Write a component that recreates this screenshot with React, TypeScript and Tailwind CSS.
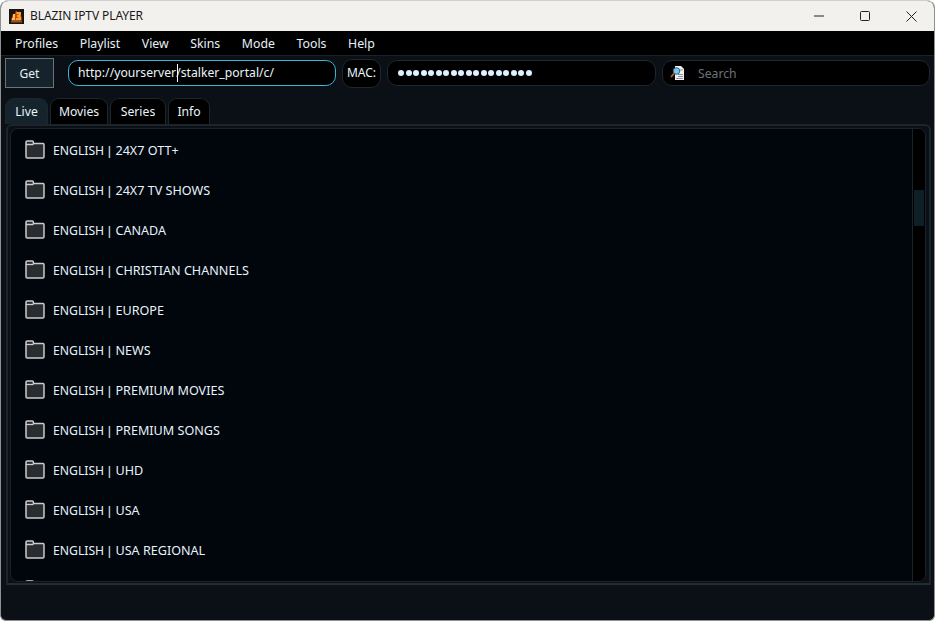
const categories = [
  "24X7 OTT+",
  "24X7 TV SHOWS",
  "CANADA",
  "CHRISTIAN CHANNELS",
  "EUROPE",
  "NEWS",
  "PREMIUM MOVIES",
  "PREMIUM SONGS",
  "UHD",
  "USA",
  "USA REGIONAL",
];

function Folder() {
  return (
    <svg width="20" height="19" viewBox="0 0 20 19" className="shrink-0">
      <path
        d="M1 6V2.200C1 1.500 1.500 1 2.200 1h5C7.900 1 8.400 1.500 8.400 2.200V3.400H18c.6 0 1 .4 1 1V16.800c0 .7-.5 1.200-1.200 1.200H2.200C1.500 18 1 17.500 1 16.800V6z"
        fill="#2a2d30"
        stroke="#cbcbcb"
        strokeWidth="1.500"
      />
      <path d="M1 4.500h7.500" stroke="#cbcbcb" strokeWidth="1.300" fill="none" />
    </svg>
  );
}

function Logo() {
  return (
    <svg width="15" height="15" viewBox="0 0 15 15" className="shrink-0">
      <rect width="15" height="15" fill="#1a1410" />
      <path d="M2 11L4 5l1.500 1L7 1.500l2 2 2-1 1.500 5L13 11l-1 1H3z" fill="#c9421a" />
      <path d="M7.500 3h4.500v3l-1 1 1 1v3H7V9h2.500V8H8V6h1.500V5H7.500z" fill="#f5a623" />
      <path d="M4 5h2v6H3V9h1z" fill="#f2c14e" />
      <rect x="2" y="12" width="11" height="1.500" fill="#8a5a20" />
    </svg>
  );
}

function SearchDoc() {
  return (
    <svg width="16" height="16" viewBox="0 0 16 16" className="shrink-0">
      <path d="M5 1h6l3 3v11H5z" fill="#f2f2f2" />
      <path d="M8 9.500h5M8 11.500h5M6 13.500h7M10 5h3" stroke="#6c7a86" strokeWidth="0.800" />
      <circle cx="6.500" cy="6" r="3.300" fill="#7cc4ee" stroke="#2f5f86" strokeWidth="1" />
      <path d="M4 8.500L1 12" stroke="#b5602c" strokeWidth="1.800" />
    </svg>
  );
}

export default function App() {
  return (
    <div
      className="w-[935px] h-[621px] overflow-hidden flex flex-col bg-[#0a1016] rounded-t-[8px] rounded-b-[6px] border border-[#8d8f90] border-t-[#cfcfcf]"
      style={{ fontFamily: '"Noto Sans", "Open Sans", sans-serif' }}
    >
      <div className="h-[30px] shrink-0 bg-[#f3f1ee] flex items-center text-[#1a1a1a]">
        <div className="ml-[8px] mr-[6px] flex">
          <Logo />
        </div>
        <span className="text-[12px] tracking-[-0.1px]">BLAZIN IPTV PLAYER</span>
        <div className="ml-auto flex items-center h-full">
          <div className="w-[46px] h-full flex items-center justify-center">
            <svg width="10" height="10" viewBox="0 0 10 10">
              <path d="M0 5h10" stroke="#222" strokeWidth="1" />
            </svg>
          </div>
          <div className="w-[46px] h-full flex items-center justify-center">
            <svg width="10" height="10" viewBox="0 0 10 10">
              <rect x="0.500" y="0.500" width="9" height="9" rx="1" fill="none" stroke="#222" strokeWidth="1" />
            </svg>
          </div>
          <div className="w-[46px] h-full flex items-center justify-center">
            <svg width="11" height="11" viewBox="0 0 11 11">
              <path d="M0.500 0.500l10 10M10.500 0.500l-10 10" stroke="#222" strokeWidth="1" />
            </svg>
          </div>
        </div>
      </div>

      <div className="h-[25px] shrink-0 bg-black flex items-center gap-[21.600px] pl-[14px] pt-[3px] text-[12.300px] text-[#e6f1f7] border-b border-[#1b2328]">
        {["Profiles", "Playlist", "View", "Skins", "Mode", "Tools", "Help"].map((m) => (
          <span key={m}>{m}</span>
        ))}
      </div>

      <div className="h-[34px] shrink-0 flex items-center pl-[4px] pr-[4px] text-[12.200px]">
        <button className="w-[49px] h-[30px] bg-[#15242c] border border-[#6d7478] text-[#e6f1f7] text-[12px] pt-[1px]">
          Get
        </button>
        <div className="ml-[14px] w-[268px] h-[26px] bg-black rounded-[10px] border border-[#3cb4d8] flex items-center pl-[9px] text-[#e9f4fa] relative">
          <span>http://yourserver/stalker_portal/c/</span>
          <span className="absolute left-[108px] top-[3px] w-px h-[18px] bg-white" />
        </div>
        <div className="ml-[6px] w-[39px] h-[29px] bg-black rounded-[10px] border border-[#1d272e] flex items-center justify-center text-[#e9f4fa] text-[12px]">
          MAC:
        </div>
        <div className="ml-[6px] w-[269px] h-[26px] bg-black rounded-[10px] border border-[#1d272e] flex items-center pl-[10px] overflow-hidden">
          <span className="flex gap-[1.500px]">
            {Array.from({ length: 18 }).map((_, i) => (
              <span key={i} className="w-[6px] h-[6px] rounded-full bg-[#ddf1ff]" />
            ))}
          </span>
        </div>
        <div className="ml-[6px] w-[268px] h-[26px] bg-black rounded-[10px] border border-[#1d272e] flex items-center pl-[7px] text-[#6c7378]">
          <SearchDoc />
          <span className="ml-[12px] pt-[2px]">Search</span>
        </div>
      </div>

      <div className="h-[34px] shrink-0 flex items-end pl-[4px] gap-[2px] text-[12.200px] text-[#e9f4fa]">
        <div className="w-[43px] h-[26px] pt-[2px] bg-[#15242c] rounded-t-[9px] border border-b-0 border-[#1b262d] flex items-center justify-center">
          Live
        </div>
        <div className="w-[58px] h-[26px] pt-[2px] bg-black rounded-t-[9px] border border-b-0 border-[#1b262d] flex items-center justify-center">
          Movies
        </div>
        <div className="w-[56px] h-[26px] pt-[2px] bg-black rounded-t-[9px] border border-b-0 border-[#1b262d] flex items-center justify-center">
          Series
        </div>
        <div className="w-[42px] h-[26px] pt-[2px] bg-black rounded-t-[9px] border border-b-0 border-[#1b262d] flex items-center justify-center">
          Info
        </div>
      </div>

      <div className="ml-[5px] mr-[3px] h-[461px] shrink-0 rounded-t-[6px] border-[2px] border-[#1c252b] border-b-[#222c31] pl-[2px] pr-[3px] pt-[2px]">
        <div className="h-[454px] flex bg-[#01050c] rounded-[8px] border border-[#1a2329] overflow-hidden">
          <div className="flex-1 overflow-hidden flex flex-col text-[12.600px] text-[#e6f3fb]">
            {categories.map((c) => (
              <div key={c} className="h-[40px] shrink-0 flex items-center pl-[14px] gap-[8px]">
                <Folder />
                <div className="flex items-baseline pt-[4px]">
                  <span className="text-[12.200px]">ENGLISH</span>
                  <span className="ml-[3.500px]" style={{ fontFamily: '"Liberation Sans", sans-serif' }}>|</span>
                  <span className="ml-[4.500px]">{c}</span>
                </div>
              </div>
            ))}
            <div className="h-[40px] shrink-0 flex items-center pl-[14px]">
              <Folder />
            </div>
          </div>
          <div className="w-[13px] shrink-0 bg-black border-l border-[#1a2329] pt-[61px] px-px">
            <div className="w-full h-[36px] bg-[#0e2027]" />
          </div>
        </div>
      </div>

      <div className="flex-1" />
    </div>
  );
}
